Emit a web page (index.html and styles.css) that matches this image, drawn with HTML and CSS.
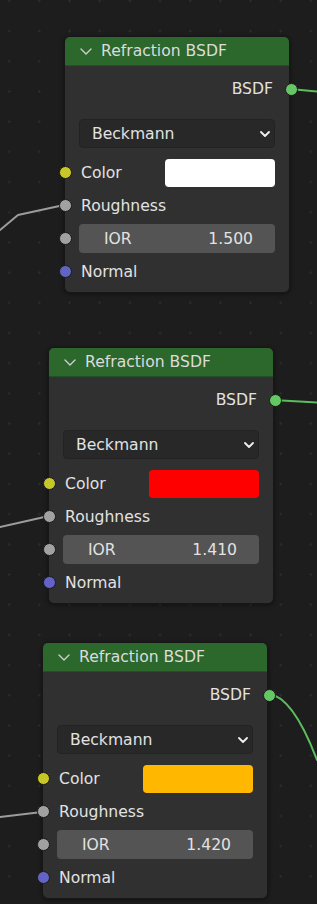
FILE: index.html
```html
<!DOCTYPE html>
<html lang="en">
<head>
  <meta charset="UTF-8">
  <title>Refraction BSDF nodes</title>
  <meta name="viewport" content="width=device-width, initial-scale=1.0" />
  <link rel="stylesheet" href="styles.css">
</head>
<body>
  <div class="canvas">

  <!-- noodles between nodes -->
  <svg class="links" width="317" height="904" viewBox="0 0 317 904">
    <path class="link-grey" d="M0,230 L18,215 L64,205" />
    <path class="link-grey" d="M0,527 L40,518 L48,516" />
    <path class="link-grey" d="M0,817 L42,812" />
    <path class="link-green" d="M290,89 L317,91.5" />
    <path class="link-green" d="M273,400 L317,402.5" />
    <path class="link-green" d="M268,694 C285,695 301,718 317,760" />
  </svg>

  <div class="node n1">
    <div class="node-head">
      <svg class="chev" width="12" height="7" viewBox="0 0 12 7"><polyline points="1,1 6,6 11,1" /></svg>
      <span>Refraction BSDF</span>
    </div>
    <div class="node-body">
      <div class="out-row">BSDF <span class="socket green out"></span></div>
      <div class="select">
        <span>Beckmann</span>
        <svg class="sel-chev" width="10" height="6" viewBox="0 0 10 6"><polyline points="1,1 5,5 9,1" /></svg>
      </div>
      <div class="row"><span class="socket yellow"></span><span class="label">Color</span><span class="swatch" style="background:#ffffff"></span></div>
      <div class="row"><span class="socket grey"></span><span class="label">Roughness</span></div>
      <div class="row"><span class="socket grey"></span><div class="field"><span>IOR</span><span>1.500</span></div></div>
      <div class="row"><span class="socket blue"></span><span class="label">Normal</span></div>
    </div>
  </div>

  <div class="node n2">
    <div class="node-head">
      <svg class="chev" width="12" height="7" viewBox="0 0 12 7"><polyline points="1,1 6,6 11,1" /></svg>
      <span>Refraction BSDF</span>
    </div>
    <div class="node-body">
      <div class="out-row">BSDF <span class="socket green out"></span></div>
      <div class="select">
        <span>Beckmann</span>
        <svg class="sel-chev" width="10" height="6" viewBox="0 0 10 6"><polyline points="1,1 5,5 9,1" /></svg>
      </div>
      <div class="row"><span class="socket yellow"></span><span class="label">Color</span><span class="swatch" style="background:#ff0000"></span></div>
      <div class="row"><span class="socket grey"></span><span class="label">Roughness</span></div>
      <div class="row"><span class="socket grey"></span><div class="field"><span>IOR</span><span>1.410</span></div></div>
      <div class="row"><span class="socket blue"></span><span class="label">Normal</span></div>
    </div>
  </div>

  <div class="node n3">
    <div class="node-head">
      <svg class="chev" width="12" height="7" viewBox="0 0 12 7"><polyline points="1,1 6,6 11,1" /></svg>
      <span>Refraction BSDF</span>
    </div>
    <div class="node-body">
      <div class="out-row">BSDF <span class="socket green out"></span></div>
      <div class="select">
        <span>Beckmann</span>
        <svg class="sel-chev" width="10" height="6" viewBox="0 0 10 6"><polyline points="1,1 5,5 9,1" /></svg>
      </div>
      <div class="row"><span class="socket yellow"></span><span class="label">Color</span><span class="swatch" style="background:#ffb700"></span></div>
      <div class="row"><span class="socket grey"></span><span class="label">Roughness</span></div>
      <div class="row"><span class="socket grey"></span><div class="field"><span>IOR</span><span>1.420</span></div></div>
      <div class="row"><span class="socket blue"></span><span class="label">Normal</span></div>
    </div>
  </div>

  </div>
</body>
</html>
```

FILE: styles.css
```css
body {
  margin: 0;
  background: #1d1d1d;
}

.canvas {
  position: relative;
  width: 317px;
  height: 904px;
  overflow: hidden;
  background-color: #1d1d1d;
  background-image: radial-gradient(circle, #2c2c2c 1px, transparent 1.2px);
  background-size: 30.2px 30.2px;
  background-position: -6px 16px;
  font-family: "DejaVu Sans", sans-serif;
  font-size: 15.6px;
  color: #e2e2e2;
}

.links {
  position: absolute;
  left: 0;
  top: 0;
}

.links path {
  fill: none;
  stroke-width: 2;
  stroke-linejoin: round;
  stroke-linecap: round;
}

.link-grey {
  stroke: #9c9c9c;
}

.link-green {
  stroke: #5cbd5c;
}

/* node frame */
.node {
  position: absolute;
  width: 226px;
  box-sizing: border-box;
  background: #303030;
  border: 1px solid #171717;
  border-radius: 6px;
  box-shadow: 0 1px 4px rgba(0, 0, 0, 0.45);
}

.n1 { left: 64px; top: 36px; }
.n2 { left: 48px; top: 347px; }
.n3 { left: 42px; top: 642px; }

.node-head {
  height: 29px;
  box-sizing: border-box;
  display: flex;
  align-items: center;
  gap: 9px;
  padding-left: 15px;
  background: #2c672c;
  border-bottom: 1px solid #23502a;
  border-radius: 5px 5px 0 0;
  color: #dcdcdc;
}

.chev polyline,
.sel-chev polyline {
  fill: none;
  stroke-linecap: round;
  stroke-linejoin: round;
}

.chev polyline {
  stroke: #cfcfcf;
  stroke-width: 1.4;
}

.sel-chev polyline {
  stroke: #f0f0f0;
  stroke-width: 1.8;
}

.node-body {
  padding: 6px 14px 4px;
}

.out-row {
  position: relative;
  height: 34px;
  display: flex;
  align-items: center;
  justify-content: flex-end;
  padding-right: 2px;
}

.select {
  margin-top: 13px;
  margin-bottom: 8px;
  height: 29px;
  box-sizing: border-box;
  display: flex;
  align-items: center;
  justify-content: space-between;
  padding: 0 4px 0 12px;
  background: #282828;
  border: 1px solid #232323;
  border-radius: 4px;
}

.row {
  position: relative;
  height: 33px;
  display: flex;
  align-items: center;
}

.label {
  flex: 1;
  padding-left: 2px;
}

.swatch {
  width: 110px;
  height: 28px;
  border-radius: 4px;
}

.field {
  flex: 1;
  height: 29px;
  display: flex;
  align-items: center;
  justify-content: space-between;
  padding: 0 22px 0 25px;
  background: #545454;
  border-radius: 4px;
}

/* sockets sit on the node edge */
.socket {
  position: absolute;
  left: -20.5px;
  top: 50%;
  width: 11px;
  height: 11px;
  margin-top: -6.5px;
  border-radius: 50%;
  border: 1px solid #1a1a1a;
}

.socket.out {
  left: auto;
  right: -22.5px;
}

.yellow { background: #c7c729; }
.grey { background: #a1a1a1; }
.blue { background: #6363c7; }
.green { background: #63c763; }
```
